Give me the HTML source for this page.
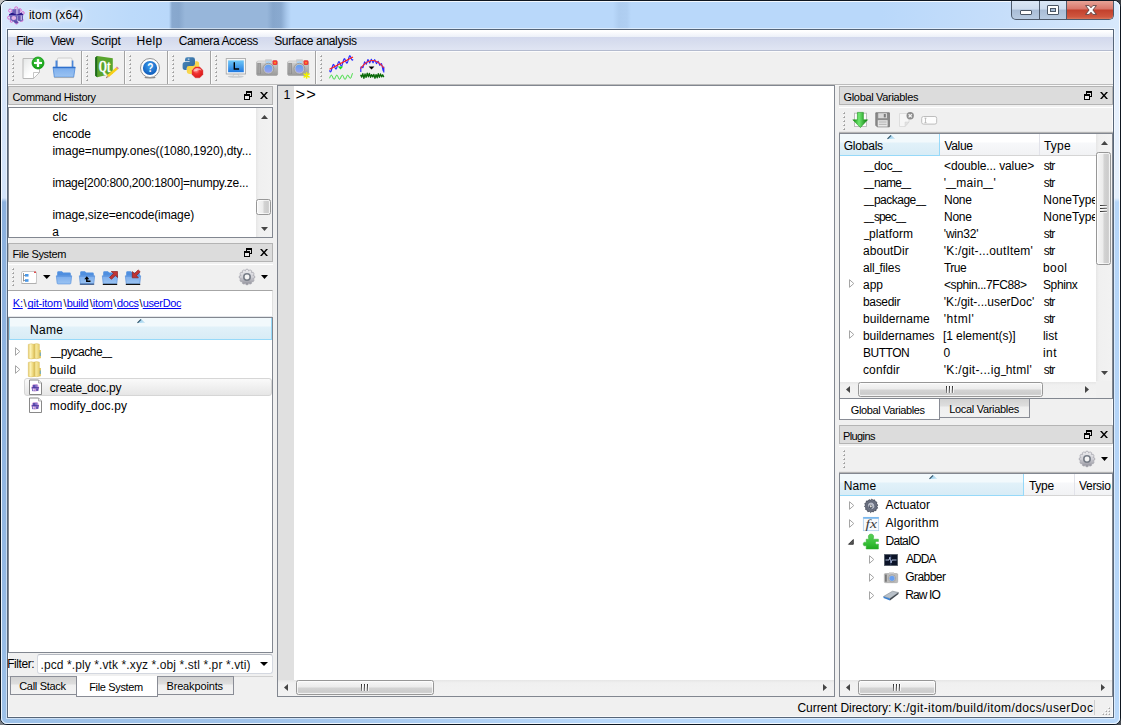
<!DOCTYPE html>
<html><head><meta charset="utf-8"><title>itom (x64)</title>
<style>
html,body{margin:0;padding:0;}
body{width:1121px;height:725px;overflow:hidden;position:relative;background:#fff;font-family:"Liberation Sans",sans-serif;font-size:12px;}
div,span.t,svg{position:absolute;box-sizing:border-box;}
span.t{white-space:nowrap;}
svg{overflow:visible;}
span.u{display:inline-block;width:5px;transform:translateY(-1px) scaleX(.76);transform-origin:0 0;letter-spacing:0;}

</style></head>
<body>
<div style="left:0px;top:0px;width:1121px;height:725px;background:#c4c4c4;"></div>
<div style="left:1111px;top:0px;width:10px;height:10px;background:#3a3e44;"></div>
<div style="left:0px;top:715px;width:10px;height:10px;background:#7c8086;"></div>
<div style="left:1111px;top:715px;width:10px;height:10px;background:#4a4e54;"></div>
<div style="left:0px;top:0px;width:1121px;height:725px;background:#b8d8fa;border-radius:7px;border:1px solid #0e1620;"></div>
<div style="left:1px;top:1px;width:1119px;height:29px;border-radius:6px 6px 0 0;background:linear-gradient(90deg,#d9e9fb 0px,#c8e0fa 60px,#bcdafa 130px,#b9d8fa 168px,#89a9cf 171px,#87a7cd 178px,#97b6da 184px,#97b6da 266px,#86a6cc 272px,#8aaad0 280px,#a9c9ed 286px,#b9d8fa 290px,#b9d8fa 612px,#aecdf0 618px,#b0cff2 626px,#b9d8fa 630px,#b9d8fa 880px,#c6defa 1000px,#d3e6fc 1090px,#d8e9fc 100%);"></div>
<div style="left:1px;top:718px;width:1119px;height:6px;border-radius:0 0 6px 6px;background:linear-gradient(90deg,#9dc1e8 0,#a0c3ea 250px,#b8d8fa 600px,#b8d8fa 100%);"></div>
<div style="left:1px;top:30px;width:6px;height:690px;background:linear-gradient(180deg,#d9e8fb 0,#d4e4f9 100px,#d2e3f8 168px,#8cb1de 172px,#8fb4e0 330px,#94b9e4 560px,#9dc1e8 100%);"></div>
<div style="left:1114px;top:30px;width:6px;height:690px;background:linear-gradient(180deg,#dbeafc 0,#e6f0fd 60px,#e4effc 168px,#b6d6f9 172px,#b4d4f7 400px,#b8d8fa 100%);"></div>
<div style="left:1px;top:1px;width:1119px;height:723px;border-radius:6px;border:1px solid rgba(255,255,255,0.82);background:none;"></div>
<div style="left:6px;top:28px;width:1109px;height:691px;border:1px solid rgba(255,255,255,.5);background:none;"></div>
<div style="left:7px;top:29px;width:1107px;height:689px;border:1px solid #566578;background:#f0f0f0;"></div>
<div style="left:8px;top:30px;width:1105px;height:687px;border:1px solid #fafafa;border-top:none;background:none;"></div>
<svg style="left:7px;top:6px" width="18" height="18" viewBox="0 0 18 18"><g fill="none" stroke="#e048c4" stroke-width="0.900" opacity=".85"><circle cx="3.200" cy="4.600" r="1.600"/><circle cx="9.200" cy="2.300" r="1.500"/><circle cx="13" cy="4" r="1.300"/><circle cx="15.800" cy="7" r="1.400"/><circle cx="2.200" cy="11.600" r="1.600"/><circle cx="4.500" cy="15" r="1.300"/><circle cx="9.500" cy="16.500" r="1.500"/><circle cx="14.500" cy="14" r="1.500"/></g><path d="M5.300 3.200h7.200v6H5.300z" fill="#6a5cb4"/><path d="M9 2.600h3.500v6.400H9z" fill="#b4a4dc"/><path d="M11.200 3.200h1.600v5.500h-1.600z" fill="#7a64bc"/><path d="M2 8.200l3-1.600 4 1.800 3-0.400 2-1.600 2.200 1.800v1.400H2z" fill="#2a1a8c"/><path d="M2.600 9.400h7.400v5.600l-3 1-3.600-2z" fill="#6c60b8"/><ellipse cx="6.800" cy="12" rx="2.400" ry="2" fill="#e4b4e4"/><path d="M10.400 9.400h5.600v4.800l-2.400 1.400-3.200-1z" fill="#6658b0"/><path d="M13.600 9.600h1.400v4.600h-1.400z" fill="#c0b0e0"/><path d="M7 14.500l3 0.500 1.500 1.500-2 1.200-2.500-1.400z" fill="#5a4ca8"/></svg>
<span id="t047e91" class="t" style="left:28.88px;top:6.84px;font-size:12px;line-height:16px;color:#000;letter-spacing:0.080px;text-shadow:0 0 4px #fff,0 0 6px #fff,0 0 8px rgba(255,255,255,.8);">itom (x64)</span>
<div style="left:1011px;top:1px;width:103px;height:19px;border:1px solid #4d5a6b;border-top:none;border-radius:0 0 5px 5px;background:linear-gradient(180deg,#dbe7f5 0%,#cddcee 45%,#a9bdd6 50%,#b8cbe2 100%);overflow:hidden;"><div style="left:54px;top:-1px;width:48px;height:20px;background:linear-gradient(180deg,#e9a99c 0%,#d9766a 45%,#c2402c 50%,#d0573f 85%,#dd8a6e 100%);border-left:1px solid #4d5a6b;"></div><div style="left:27px;top:-1px;width:1px;height:20px;background:#4d5a6b;"></div></div>
<div style="left:1020px;top:10px;width:12px;height:5px;background:#fff;border:1px solid #4a5665;border-radius:1px;"></div>
<div style="left:1047px;top:5px;width:12px;height:10px;background:#fff;border:1px solid #4a5665;border-radius:1px;"></div>
<div style="left:1050px;top:8px;width:6px;height:4px;background:#a9bdd6;border:1px solid #4a5665;"></div>
<svg style="left:1085px;top:5px" width="12" height="10" viewBox="0 0 12 10"><path d="M0.600 0.600 L4.200 0.600 L6 2.800 L7.800 0.600 L11.400 0.600 L7.900 5 L11.400 9.400 L7.800 9.400 L6 7.200 L4.200 9.400 L0.600 9.400 L4.100 5 Z" fill="#fff" stroke="#5a4040" stroke-width="0.9"/></svg>
<div style="left:8px;top:30px;width:1105px;height:20px;background:linear-gradient(180deg,#ffffff 0,#ffffff 1px,#f6f8fc 4px,#ecf0f8 7px,#d3d9ed 7.500px,#d8deef 13px,#e0e5f3 20px);"></div>
<div style="left:8px;top:50px;width:1105px;height:1px;background:#b4bbcf;"></div>
<span id="t0b2791" class="t" style="left:16.22px;top:32.84px;font-size:12px;line-height:16px;color:#000;letter-spacing:-0.540px;">File</span>
<span id="t4351c1" class="t" style="left:50.22px;top:32.84px;font-size:12px;line-height:16px;color:#000;letter-spacing:-0.540px;">View</span>
<span id="tf907e1" class="t" style="left:91.00px;top:32.84px;font-size:12px;line-height:16px;color:#000;letter-spacing:-0.180px;">Script</span>
<span id="t6a26f1" class="t" style="left:136.60px;top:32.84px;font-size:12px;line-height:16px;color:#000;letter-spacing:0.300px;">Help</span>
<span id="t5fb631" class="t" style="left:178.75px;top:32.84px;font-size:12px;line-height:16px;color:#000;letter-spacing:-0.375px;">Camera Access</span>
<span id="ta3ac31" class="t" style="left:274.22px;top:32.84px;font-size:12px;line-height:16px;color:#000;letter-spacing:-0.348px;">Surface analysis</span>
<div style="left:8px;top:51px;width:1105px;height:33px;background:#f0f0f0;border-top:1px solid #fcfcfc;"></div>
<div style="left:8px;top:84px;width:1105px;height:1px;background:#bcbcbc;"></div>
<div style="left:8px;top:85px;width:1105px;height:1px;background:#f8f8f8;"></div>
<div style="left:12px;top:55px;width:3px;height:28px;"><div style="left:0;top:0px;width:2px;height:2px;background:#b6b6b6;"></div><div style="left:0;top:0px;width:1px;height:1px;background:#fff;"></div><div style="left:1px;top:1px;width:1px;height:1px;background:#9c9c9c;"></div><div style="left:0;top:4px;width:2px;height:2px;background:#b6b6b6;"></div><div style="left:0;top:4px;width:1px;height:1px;background:#fff;"></div><div style="left:1px;top:5px;width:1px;height:1px;background:#9c9c9c;"></div><div style="left:0;top:8px;width:2px;height:2px;background:#b6b6b6;"></div><div style="left:0;top:8px;width:1px;height:1px;background:#fff;"></div><div style="left:1px;top:9px;width:1px;height:1px;background:#9c9c9c;"></div><div style="left:0;top:12px;width:2px;height:2px;background:#b6b6b6;"></div><div style="left:0;top:12px;width:1px;height:1px;background:#fff;"></div><div style="left:1px;top:13px;width:1px;height:1px;background:#9c9c9c;"></div><div style="left:0;top:16px;width:2px;height:2px;background:#b6b6b6;"></div><div style="left:0;top:16px;width:1px;height:1px;background:#fff;"></div><div style="left:1px;top:17px;width:1px;height:1px;background:#9c9c9c;"></div><div style="left:0;top:20px;width:2px;height:2px;background:#b6b6b6;"></div><div style="left:0;top:20px;width:1px;height:1px;background:#fff;"></div><div style="left:1px;top:21px;width:1px;height:1px;background:#9c9c9c;"></div><div style="left:0;top:24px;width:2px;height:2px;background:#b6b6b6;"></div><div style="left:0;top:24px;width:1px;height:1px;background:#fff;"></div><div style="left:1px;top:25px;width:1px;height:1px;background:#9c9c9c;"></div></div>
<div style="left:86px;top:55px;width:3px;height:28px;"><div style="left:0;top:0px;width:2px;height:2px;background:#b6b6b6;"></div><div style="left:0;top:0px;width:1px;height:1px;background:#fff;"></div><div style="left:1px;top:1px;width:1px;height:1px;background:#9c9c9c;"></div><div style="left:0;top:4px;width:2px;height:2px;background:#b6b6b6;"></div><div style="left:0;top:4px;width:1px;height:1px;background:#fff;"></div><div style="left:1px;top:5px;width:1px;height:1px;background:#9c9c9c;"></div><div style="left:0;top:8px;width:2px;height:2px;background:#b6b6b6;"></div><div style="left:0;top:8px;width:1px;height:1px;background:#fff;"></div><div style="left:1px;top:9px;width:1px;height:1px;background:#9c9c9c;"></div><div style="left:0;top:12px;width:2px;height:2px;background:#b6b6b6;"></div><div style="left:0;top:12px;width:1px;height:1px;background:#fff;"></div><div style="left:1px;top:13px;width:1px;height:1px;background:#9c9c9c;"></div><div style="left:0;top:16px;width:2px;height:2px;background:#b6b6b6;"></div><div style="left:0;top:16px;width:1px;height:1px;background:#fff;"></div><div style="left:1px;top:17px;width:1px;height:1px;background:#9c9c9c;"></div><div style="left:0;top:20px;width:2px;height:2px;background:#b6b6b6;"></div><div style="left:0;top:20px;width:1px;height:1px;background:#fff;"></div><div style="left:1px;top:21px;width:1px;height:1px;background:#9c9c9c;"></div><div style="left:0;top:24px;width:2px;height:2px;background:#b6b6b6;"></div><div style="left:0;top:24px;width:1px;height:1px;background:#fff;"></div><div style="left:1px;top:25px;width:1px;height:1px;background:#9c9c9c;"></div></div>
<div style="left:129px;top:55px;width:3px;height:28px;"><div style="left:0;top:0px;width:2px;height:2px;background:#b6b6b6;"></div><div style="left:0;top:0px;width:1px;height:1px;background:#fff;"></div><div style="left:1px;top:1px;width:1px;height:1px;background:#9c9c9c;"></div><div style="left:0;top:4px;width:2px;height:2px;background:#b6b6b6;"></div><div style="left:0;top:4px;width:1px;height:1px;background:#fff;"></div><div style="left:1px;top:5px;width:1px;height:1px;background:#9c9c9c;"></div><div style="left:0;top:8px;width:2px;height:2px;background:#b6b6b6;"></div><div style="left:0;top:8px;width:1px;height:1px;background:#fff;"></div><div style="left:1px;top:9px;width:1px;height:1px;background:#9c9c9c;"></div><div style="left:0;top:12px;width:2px;height:2px;background:#b6b6b6;"></div><div style="left:0;top:12px;width:1px;height:1px;background:#fff;"></div><div style="left:1px;top:13px;width:1px;height:1px;background:#9c9c9c;"></div><div style="left:0;top:16px;width:2px;height:2px;background:#b6b6b6;"></div><div style="left:0;top:16px;width:1px;height:1px;background:#fff;"></div><div style="left:1px;top:17px;width:1px;height:1px;background:#9c9c9c;"></div><div style="left:0;top:20px;width:2px;height:2px;background:#b6b6b6;"></div><div style="left:0;top:20px;width:1px;height:1px;background:#fff;"></div><div style="left:1px;top:21px;width:1px;height:1px;background:#9c9c9c;"></div><div style="left:0;top:24px;width:2px;height:2px;background:#b6b6b6;"></div><div style="left:0;top:24px;width:1px;height:1px;background:#fff;"></div><div style="left:1px;top:25px;width:1px;height:1px;background:#9c9c9c;"></div></div>
<div style="left:172px;top:55px;width:3px;height:28px;"><div style="left:0;top:0px;width:2px;height:2px;background:#b6b6b6;"></div><div style="left:0;top:0px;width:1px;height:1px;background:#fff;"></div><div style="left:1px;top:1px;width:1px;height:1px;background:#9c9c9c;"></div><div style="left:0;top:4px;width:2px;height:2px;background:#b6b6b6;"></div><div style="left:0;top:4px;width:1px;height:1px;background:#fff;"></div><div style="left:1px;top:5px;width:1px;height:1px;background:#9c9c9c;"></div><div style="left:0;top:8px;width:2px;height:2px;background:#b6b6b6;"></div><div style="left:0;top:8px;width:1px;height:1px;background:#fff;"></div><div style="left:1px;top:9px;width:1px;height:1px;background:#9c9c9c;"></div><div style="left:0;top:12px;width:2px;height:2px;background:#b6b6b6;"></div><div style="left:0;top:12px;width:1px;height:1px;background:#fff;"></div><div style="left:1px;top:13px;width:1px;height:1px;background:#9c9c9c;"></div><div style="left:0;top:16px;width:2px;height:2px;background:#b6b6b6;"></div><div style="left:0;top:16px;width:1px;height:1px;background:#fff;"></div><div style="left:1px;top:17px;width:1px;height:1px;background:#9c9c9c;"></div><div style="left:0;top:20px;width:2px;height:2px;background:#b6b6b6;"></div><div style="left:0;top:20px;width:1px;height:1px;background:#fff;"></div><div style="left:1px;top:21px;width:1px;height:1px;background:#9c9c9c;"></div><div style="left:0;top:24px;width:2px;height:2px;background:#b6b6b6;"></div><div style="left:0;top:24px;width:1px;height:1px;background:#fff;"></div><div style="left:1px;top:25px;width:1px;height:1px;background:#9c9c9c;"></div></div>
<div style="left:215px;top:55px;width:3px;height:28px;"><div style="left:0;top:0px;width:2px;height:2px;background:#b6b6b6;"></div><div style="left:0;top:0px;width:1px;height:1px;background:#fff;"></div><div style="left:1px;top:1px;width:1px;height:1px;background:#9c9c9c;"></div><div style="left:0;top:4px;width:2px;height:2px;background:#b6b6b6;"></div><div style="left:0;top:4px;width:1px;height:1px;background:#fff;"></div><div style="left:1px;top:5px;width:1px;height:1px;background:#9c9c9c;"></div><div style="left:0;top:8px;width:2px;height:2px;background:#b6b6b6;"></div><div style="left:0;top:8px;width:1px;height:1px;background:#fff;"></div><div style="left:1px;top:9px;width:1px;height:1px;background:#9c9c9c;"></div><div style="left:0;top:12px;width:2px;height:2px;background:#b6b6b6;"></div><div style="left:0;top:12px;width:1px;height:1px;background:#fff;"></div><div style="left:1px;top:13px;width:1px;height:1px;background:#9c9c9c;"></div><div style="left:0;top:16px;width:2px;height:2px;background:#b6b6b6;"></div><div style="left:0;top:16px;width:1px;height:1px;background:#fff;"></div><div style="left:1px;top:17px;width:1px;height:1px;background:#9c9c9c;"></div><div style="left:0;top:20px;width:2px;height:2px;background:#b6b6b6;"></div><div style="left:0;top:20px;width:1px;height:1px;background:#fff;"></div><div style="left:1px;top:21px;width:1px;height:1px;background:#9c9c9c;"></div><div style="left:0;top:24px;width:2px;height:2px;background:#b6b6b6;"></div><div style="left:0;top:24px;width:1px;height:1px;background:#fff;"></div><div style="left:1px;top:25px;width:1px;height:1px;background:#9c9c9c;"></div></div>
<div style="left:320px;top:55px;width:3px;height:28px;"><div style="left:0;top:0px;width:2px;height:2px;background:#b6b6b6;"></div><div style="left:0;top:0px;width:1px;height:1px;background:#fff;"></div><div style="left:1px;top:1px;width:1px;height:1px;background:#9c9c9c;"></div><div style="left:0;top:4px;width:2px;height:2px;background:#b6b6b6;"></div><div style="left:0;top:4px;width:1px;height:1px;background:#fff;"></div><div style="left:1px;top:5px;width:1px;height:1px;background:#9c9c9c;"></div><div style="left:0;top:8px;width:2px;height:2px;background:#b6b6b6;"></div><div style="left:0;top:8px;width:1px;height:1px;background:#fff;"></div><div style="left:1px;top:9px;width:1px;height:1px;background:#9c9c9c;"></div><div style="left:0;top:12px;width:2px;height:2px;background:#b6b6b6;"></div><div style="left:0;top:12px;width:1px;height:1px;background:#fff;"></div><div style="left:1px;top:13px;width:1px;height:1px;background:#9c9c9c;"></div><div style="left:0;top:16px;width:2px;height:2px;background:#b6b6b6;"></div><div style="left:0;top:16px;width:1px;height:1px;background:#fff;"></div><div style="left:1px;top:17px;width:1px;height:1px;background:#9c9c9c;"></div><div style="left:0;top:20px;width:2px;height:2px;background:#b6b6b6;"></div><div style="left:0;top:20px;width:1px;height:1px;background:#fff;"></div><div style="left:1px;top:21px;width:1px;height:1px;background:#9c9c9c;"></div><div style="left:0;top:24px;width:2px;height:2px;background:#b6b6b6;"></div><div style="left:0;top:24px;width:1px;height:1px;background:#fff;"></div><div style="left:1px;top:25px;width:1px;height:1px;background:#9c9c9c;"></div></div>
<div style="left:81px;top:51px;width:1px;height:33px;background:#a3a3a3;"></div>
<div style="left:82px;top:51px;width:1px;height:33px;background:#fcfcfc;"></div>
<div style="left:124px;top:51px;width:1px;height:33px;background:#a3a3a3;"></div>
<div style="left:125px;top:51px;width:1px;height:33px;background:#fcfcfc;"></div>
<div style="left:167px;top:51px;width:1px;height:33px;background:#a3a3a3;"></div>
<div style="left:168px;top:51px;width:1px;height:33px;background:#fcfcfc;"></div>
<div style="left:210px;top:51px;width:1px;height:33px;background:#a3a3a3;"></div>
<div style="left:211px;top:51px;width:1px;height:33px;background:#fcfcfc;"></div>
<div style="left:315px;top:51px;width:1px;height:33px;background:#a3a3a3;"></div>
<div style="left:316px;top:51px;width:1px;height:33px;background:#fcfcfc;"></div>
<svg width="0" height="0" style="left:0;top:0"><defs>
<linearGradient id="gpage" x1="0" y1="0" x2="1" y2="1"><stop offset="0" stop-color="#e4e6e6"/><stop offset="0.6" stop-color="#ffffff"/></linearGradient>
<linearGradient id="gtray" x1="0" y1="0" x2="0" y2="1"><stop offset="0" stop-color="#4f8fdf"/><stop offset="0.15" stop-color="#7fb0ee"/><stop offset="1" stop-color="#9cc4f2"/></linearGradient>
<radialGradient id="ggreen" cx="0.5" cy="0.4" r="0.6"><stop offset="0" stop-color="#5fd45f"/><stop offset="1" stop-color="#0a9a0a"/></radialGradient>
<radialGradient id="ghelp" cx="0.5" cy="0.35" r="0.7"><stop offset="0" stop-color="#3f9fef"/><stop offset="1" stop-color="#0a55b5"/></radialGradient>
<linearGradient id="gcam" x1="0" y1="0" x2="0" y2="1"><stop offset="0" stop-color="#d4d4d4"/><stop offset="0.5" stop-color="#b4b4b4"/><stop offset="1" stop-color="#9a9a9a"/></linearGradient>
<linearGradient id="glens" x1="0" y1="0" x2="0" y2="1"><stop offset="0" stop-color="#5fa0f0"/><stop offset="1" stop-color="#9aa0f0"/></linearGradient>
<linearGradient id="gscr" x1="0" y1="0" x2="0" y2="1"><stop offset="0" stop-color="#6fc8f8"/><stop offset="1" stop-color="#1f78e0"/></linearGradient>
<radialGradient id="gred" cx="0.4" cy="0.35" r="0.7"><stop offset="0" stop-color="#ff8a8a"/><stop offset="0.4" stop-color="#f03030"/><stop offset="1" stop-color="#d81818"/></radialGradient>
</defs></svg>
<svg style="left:21px;top:55px" width="24" height="24" viewBox="0 0 24 24"><path d="M2 3.5h16.5v14l-6 6H2z" fill="url(#gpage)" stroke="#b8b8b8" stroke-width="1"/><path d="M12.5 23.5v-6h6z" fill="#fff" stroke="#b8b8b8" stroke-width="0.8"/><circle cx="17" cy="8" r="6" fill="url(#ggreen)" stroke="#0c9a0c" stroke-width="0.8"/><path d="M13 8h8M17 4v8" stroke="#fff" stroke-width="2.2"/></svg>
<svg style="left:52px;top:55px" width="24" height="24" viewBox="0 0 24 24"><rect x="5.4" y="3" width="14.6" height="10" rx="1.2" fill="#f6f6f6" stroke="#c4c4c4" stroke-width="0.8"/><path d="M3.5 5.5h2v7h-2zM19.8 5.5h1.6v7h-1.6z" fill="#4a86d8"/><path d="M1 12h22.2l-1.5 10.2H2.3z" fill="url(#gtray)" stroke="#3f7fd4" stroke-width="0.7"/><path d="M1 12h22.2v1.2H1z" fill="#2f70cc"/><path d="M2.5 22.6h19" stroke="#a8a8a8" stroke-width="0.8"/></svg>
<svg style="left:94px;top:55px" width="24" height="24" viewBox="0 0 24 24"><path d="M1.200 2.400l2-1.500 15.600 2.400v15.200L3.200 22.300l-2-1.500z" fill="#5aa52e"/><path d="M1.200 2.400l2-1.500v21.400l-2-1.500z" fill="#1f6a1f"/><g transform="translate(4.8,17) scale(0.62,1)"><text x="0" y="0" font-family="Liberation Serif" font-weight="bold" font-size="17" fill="#fff" stroke="#fff" stroke-width="0.4">Qt</text></g><path d="M22 12.400l1.900 1.900-8.900 7.700-2-1.800z" fill="#f8d018"/><path d="M22 12.400l0.900-0.900 2 1.800-1 1z" fill="#e08090"/><path d="M13 20.200l2 1.800-3 1.200z" fill="#c8a070"/><path d="M12 23.200l1-0.400-0.600-0.600z" fill="#404040"/></svg>
<svg style="left:138px;top:55px" width="24" height="24" viewBox="0 0 24 24"><ellipse cx="12" cy="22.500" rx="5.500" ry="0.900" fill="#333" opacity=".55"/><circle cx="12" cy="13" r="9.500" fill="#fdfdfd" stroke="#8a8a8a" stroke-width="0.900"/><circle cx="12" cy="13" r="7.100" fill="url(#ghelp)"/><g transform="translate(9.300,17.400) scale(0.800,1)"><text x="0" y="0" font-family="Liberation Sans" font-weight="bold" font-size="12.500" fill="#fff">?</text></g></svg>
<svg style="left:181px;top:55px" width="24" height="24" viewBox="0 0 24 24"><defs><linearGradient id="gpyb" x1="0" y1="0" x2="1" y2="1"><stop offset="0" stop-color="#4a8ac0"/><stop offset="1" stop-color="#2f6494"/></linearGradient><linearGradient id="gpyy" x1="0" y1="0" x2="1" y2="1"><stop offset="0" stop-color="#fce060"/><stop offset="1" stop-color="#f4cc38"/></linearGradient></defs><path d="M8.200 2.300h3.400q2.400 0 2.400 2.400v4q0 2.300-2.300 2.300h-3.700q-2.400 0-2.400 2.400v1.600h-1.600q-2.400 0-2.400-2.700v-2.600q0-2.700 2.400-2.700h4.600v-0.800h-4.600v-1.500q0-2.400 2.200-2.400z" fill="url(#gpyy)" transform="rotate(180 9.900 10.650)"/><path d="M8.200 2.300h3.400q2.400 0 2.400 2.400v4q0 2.300-2.300 2.300h-3.700q-2.400 0-2.400 2.400v1.600h-1.600q-2.400 0-2.400-2.700v-2.600q0-2.700 2.400-2.700h4.600v-0.800h-4.600v-1.500q0-2.400 2.200-2.400z" fill="url(#gpyb)"/><rect x="6.800" y="3.600" width="1.600" height="1.100" fill="#dce8f4"/><path d="M14.300 12h4.400l3.200 3.200v4.400l-3.200 3.200h-4.400l-3.200-3.200v-4.400z" fill="url(#gred)" stroke="#d42020" stroke-width="0.400"/><path d="M12.300 16.200q0.600-3 4.200-3.200 3.400 0.200 4.200 2.600-2.200-1.200-4.200 0-2 1.200-4.200 0.600z" fill="#fff" opacity=".55"/></svg>
<svg style="left:224px;top:55px" width="24" height="24" viewBox="0 0 24 24"><ellipse cx="11.800" cy="21.600" rx="8" ry="1.100" fill="#c8ccd0"/><path d="M10 18.800h4l0.800 2.600h-5.600z" fill="#ececec" stroke="#c4c4c4" stroke-width="0.500"/><rect x="2.200" y="3.600" width="19.400" height="15.400" fill="#f6f6f6" stroke="#a4a4a4" stroke-width="0.800"/><rect x="4.100" y="5.400" width="15.700" height="11.800" fill="url(#gscr)"/><path d="M10.300 7.200v6.800h4.800" fill="none" stroke="#000" stroke-width="1.400"/></svg>
<svg style="left:256px;top:55px" width="24" height="24" viewBox="0 0 24 24"><rect x="0.6" y="6.2" width="21" height="14.2" rx="1.5" fill="url(#gcam)" stroke="#9a9a9a" stroke-width="0.6"/><path d="M1.2 7h8" stroke="#ececec" stroke-width="1"/><rect x="9" y="4.3" width="7" height="3" rx="1" fill="#cccccc"/><rect x="1.4" y="8" width="3.4" height="11" fill="#8c8c8c"/><path d="M2.2 8.4v10.2M3.5 8.4v10.2" stroke="#bcbcbc" stroke-width="0.5"/><rect x="10" y="6.4" width="5" height="1.6" fill="#a8d4f8"/><circle cx="12.4" cy="13.7" r="5.4" fill="#c4c4c4" stroke="#909090" stroke-width="0.8"/><circle cx="12.4" cy="13.7" r="4" fill="url(#glens)"/><rect x="16.6" y="5.3" width="4.8" height="4.8" rx="1.3" fill="#f03838"/><circle cx="19" cy="7.7" r="1" fill="#ff9020"/></svg>
<svg style="left:287px;top:55px" width="26" height="26" viewBox="0 0 26 26"><rect x="0.6" y="6.2" width="21" height="14.2" rx="1.5" fill="url(#gcam)" stroke="#9a9a9a" stroke-width="0.6"/><path d="M1.2 7h8" stroke="#ececec" stroke-width="1"/><rect x="9" y="4.3" width="7" height="3" rx="1" fill="#cccccc"/><rect x="1.4" y="8" width="3.4" height="11" fill="#8c8c8c"/><path d="M2.2 8.4v10.2M3.5 8.4v10.2" stroke="#bcbcbc" stroke-width="0.5"/><rect x="10" y="6.4" width="5" height="1.6" fill="#a8d4f8"/><circle cx="12.4" cy="13.7" r="5.4" fill="#c4c4c4" stroke="#909090" stroke-width="0.8"/><circle cx="12.4" cy="13.7" r="4" fill="url(#glens)"/><rect x="16.6" y="5.3" width="4.8" height="4.8" rx="1.3" fill="#f03838"/><circle cx="19" cy="7.7" r="1" fill="#ff9020"/><path d="M19.6 17.2v6.6M16.6 18.6l6 3.8M22.6 18.6l-6 3.8" stroke="#f0f000" stroke-width="1.5"/></svg>
<svg style="left:329px;top:55px" width="24" height="24" viewBox="0 0 24 24"><path d="M0.50 15.36L0.89 16.27L1.28 16.79L1.68 16.77L2.07 16.17L2.46 15.07L2.85 13.65L3.24 12.16L3.63 10.83L4.03 9.91L4.42 9.53L4.81 9.72L5.20 10.41L5.59 11.42L5.98 12.50L6.38 13.40L6.77 13.89L7.16 13.84L7.55 13.22L7.94 12.10L8.33 10.68L8.72 9.18L9.12 7.87L9.51 6.97L9.90 6.62L10.29 6.84L10.68 7.55L11.08 8.56L11.47 9.64L11.86 10.52L12.25 11.00L12.64 10.92L13.03 10.27L13.43 9.14L13.82 7.70L14.21 6.21L14.60 4.91L14.99 4.04L15.38 3.71L15.78 3.95L16.17 4.68L16.56 5.71L16.95 6.78L17.34 7.65L17.73 8.10L18.12 8.00L18.52 7.32L18.91 6.17L19.30 4.72L19.69 3.23L20.08 1.96L20.47 1.10L20.87 0.80L21.26 1.07L21.65 1.82L22.04 2.85L22.43 3.92L22.82 4.77L23.22 5.20L23.61 5.07L24.00 4.37" fill="none" stroke="#2828ff" stroke-width="1.150"/><path d="M0.500 14.300L24 2" stroke="#ff1818" stroke-width="1.100"/><path d="M8.800 11.600h5.400l-2.700 3z" fill="#18e418"/><path d="M0.50 23.28L0.88 22.41L1.27 21.50L1.65 20.73L2.03 20.23L2.42 20.11L2.80 20.38L3.18 21.01L3.57 21.86L3.95 22.77L4.33 23.58L4.72 24.12L5.10 24.30L5.48 24.08L5.87 23.50L6.25 22.67L6.63 21.76L7.02 20.93L7.40 20.34L7.78 20.10L8.17 20.27L8.55 20.80L8.93 21.60L9.32 22.51L9.70 23.37L10.08 24.00L10.47 24.29L10.85 24.18L11.23 23.70L11.62 22.93L12.00 22.02L12.38 21.14L12.77 20.47L13.15 20.13L13.53 20.18L13.92 20.61L14.30 21.35L14.68 22.25L15.07 23.14L15.45 23.85L15.83 24.25L16.22 24.25L16.60 23.87L16.98 23.17L17.37 22.28L17.75 21.38L18.13 20.64L18.52 20.19L18.90 20.12L19.28 20.45L19.67 21.12L20.05 21.99L20.43 22.62L20.82 23.12L21.20 23.34L21.58 23.18L21.97 22.63L22.35 21.73L22.73 20.60L23.12 19.41L23.50 18.32" fill="none" stroke="#34dc34" stroke-width="1"/></svg>
<svg style="left:360px;top:55px" width="24" height="24" viewBox="0 0 24 24"><path d="M0.80 17.00L0.80 13.00L1.20 11.76L2.89 12.77L4.58 6.89L6.28 9.25L7.97 4.49L9.66 7.95L11.35 4.33L13.05 7.78L14.74 4.64L16.43 8.63L18.12 6.32L19.82 10.32L21.51 8.67L23.20 15.85L23.80 12L23.80 17.50" fill="none" stroke="#2828ff" stroke-width="1.150" stroke-linejoin="round"/><path d="M0.60 13.60L1.37 12.54L2.15 11.59L2.92 10.72L3.69 9.92L4.47 9.19L5.24 8.53L6.01 7.92L6.79 7.38L7.56 6.91L8.33 6.50L9.11 6.16L9.88 5.89L10.65 5.69L11.43 5.56L12.20 5.50L12.97 5.52L13.75 5.60L14.52 5.75L15.29 5.98L16.07 6.27L16.84 6.63L17.61 7.06L18.39 7.55L19.16 8.12L19.93 8.74L20.71 9.43L21.48 10.18L22.25 11.00L23.03 11.90L23.80 12.88" fill="none" stroke="#ff2828" stroke-width="1.050"/><path d="M8.600 11.600h5.800l-2.900 3z" fill="#000"/><path d="M0.60 19.65L1.70 22.13L2.81 18.73L3.91 23.46L5.02 18.82L6.12 22.45L7.23 18.08L8.33 21.81L9.44 18.30L10.54 22.25L11.65 19.61L12.75 21.94L13.86 19.31L14.96 23.22L16.07 19.55L17.17 22.79L18.28 18.70L19.38 22.41L20.49 18.87L21.59 21.84L22.70 19.77L23.80 22.10" fill="none" stroke="#0a6a0a" stroke-width="1.300" stroke-linejoin="round"/></svg>
<div style="left:8px;top:86px;width:265px;height:19px;background:#dcdcdc;border:1px solid #b4b4b4;"></div>
<span id="tdcdc61" class="t" style="left:12.50px;top:89.19px;font-size:11px;line-height:16px;color:#000;letter-spacing:-0.321px;">Command History</span>
<svg style="left:244px;top:91px" width="9" height="10" viewBox="0 0 9 10"><path d="M2 0h6v6H6v-1h1V2H3v1H2z" fill="#000"/><rect x="0" y="3" width="6" height="6" fill="#000"/><rect x="1" y="5" width="4" height="3" fill="#e9e9e9"/></svg>
<svg style="left:260px;top:92px" width="8" height="7" viewBox="0 0 8 7"><path d="M0 0h1.900L4 2.500 6.100 0H8L5 3.500 8 7H6.100L4 4.500 1.900 7H0l3-3.500z" fill="#000"/></svg>
<div style="left:8px;top:105px;width:265px;height:2px;background:#fbfbfb;"></div>
<div style="left:8px;top:107px;width:265px;height:131px;background:#fff;border:1px solid #828790;"></div>
<div style="left:256px;top:108px;width:16px;height:129px;background:linear-gradient(90deg,#e6e6e6 0,#f0f0f0 3px,#f2f2f2 100%);"></div>
<svg style="left:261px;top:115px" width="7" height="4" viewBox="0 0 7 4"><path d="M0 4L3.5 0L7 4Z" fill="#454545"/></svg>
<svg style="left:261px;top:227px" width="7" height="4" viewBox="0 0 7 4"><path d="M0 0L3.5 4L7 0Z" fill="#454545"/></svg>
<div style="left:256px;top:199px;width:15px;height:16px;border:1px solid #979797;border-radius:2.5px;background:linear-gradient(90deg,#f7f7f7 0,#ebebeb 48%,#d4d4d4 52%,#cdcdcd 80%,#d6d6d6 100%);box-shadow:inset 0 0 0 1px rgba(255,255,255,.7);"></div>
<span id="tddee11" class="t" style="left:52.50px;top:108.84px;font-size:12px;line-height:16px;color:#000;">clc</span>
<span id="t97a571" class="t" style="left:52.50px;top:125.84px;font-size:12px;line-height:16px;color:#000;letter-spacing:-0.180px;">encode</span>
<span id="t29c191" class="t" style="left:52.50px;top:142.84px;font-size:12px;line-height:16px;color:#000;letter-spacing:-0.069px;">image=numpy.ones((1080,1920),dty...</span>
<span id="t261cb1" class="t" style="left:52.50px;top:174.84px;font-size:12px;line-height:16px;color:#000;letter-spacing:-0.244px;">image[200:800,200:1800]=numpy.ze...</span>
<span id="tf7f881" class="t" style="left:52.50px;top:206.84px;font-size:12px;line-height:16px;color:#000;letter-spacing:-0.117px;">image,size=encode(image)</span>
<span id="t0cc171" class="t" style="left:52.20px;top:223.84px;font-size:12px;line-height:16px;color:#000;">a</span>
<div style="left:8px;top:243px;width:265px;height:19px;background:#dcdcdc;border:1px solid #b4b4b4;"></div>
<span id="t6c2021" class="t" style="left:12.50px;top:246.19px;font-size:11px;line-height:16px;color:#000;letter-spacing:-0.360px;">File System</span>
<svg style="left:244px;top:248px" width="9" height="10" viewBox="0 0 9 10"><path d="M2 0h6v6H6v-1h1V2H3v1H2z" fill="#000"/><rect x="0" y="3" width="6" height="6" fill="#000"/><rect x="1" y="5" width="4" height="3" fill="#e9e9e9"/></svg>
<svg style="left:260px;top:249px" width="8" height="7" viewBox="0 0 8 7"><path d="M0 0h1.900L4 2.500 6.100 0H8L5 3.500 8 7H6.100L4 4.500 1.900 7H0l3-3.500z" fill="#000"/></svg>
<div style="left:8px;top:264px;width:265px;height:1px;background:#fff;"></div>
<div style="left:12px;top:268px;width:3px;height:20px;"><div style="left:0;top:0px;width:2px;height:2px;background:#b6b6b6;"></div><div style="left:0;top:0px;width:1px;height:1px;background:#fff;"></div><div style="left:1px;top:1px;width:1px;height:1px;background:#9c9c9c;"></div><div style="left:0;top:4px;width:2px;height:2px;background:#b6b6b6;"></div><div style="left:0;top:4px;width:1px;height:1px;background:#fff;"></div><div style="left:1px;top:5px;width:1px;height:1px;background:#9c9c9c;"></div><div style="left:0;top:8px;width:2px;height:2px;background:#b6b6b6;"></div><div style="left:0;top:8px;width:1px;height:1px;background:#fff;"></div><div style="left:1px;top:9px;width:1px;height:1px;background:#9c9c9c;"></div><div style="left:0;top:12px;width:2px;height:2px;background:#b6b6b6;"></div><div style="left:0;top:12px;width:1px;height:1px;background:#fff;"></div><div style="left:1px;top:13px;width:1px;height:1px;background:#9c9c9c;"></div><div style="left:0;top:16px;width:2px;height:2px;background:#b6b6b6;"></div><div style="left:0;top:16px;width:1px;height:1px;background:#fff;"></div><div style="left:1px;top:17px;width:1px;height:1px;background:#9c9c9c;"></div></div>
<div style="left:8px;top:290px;width:265px;height:26px;background:#fff;border-top:1px solid #a6a6a6;border-right:1px solid #e0e0e0"></div>
<div style="left:8px;top:316px;width:265px;height:1px;background:#e4e6ea;"></div>
<svg style="left:21px;top:270px" width="16" height="16" viewBox="0 0 16 16"><rect x="0.500" y="1.500" width="15" height="12" rx="1.500" fill="#fff" stroke="#c8c8c8" stroke-width="1"/><path d="M0.500 13.500h15" stroke="#b0b0b0"/><path d="M2.500 3v8.500M2.500 5.500h2M2.500 10.500h2" stroke="#808080" stroke-width="0.800" fill="none"/><rect x="4" y="4" width="3.500" height="2.600" fill="#4a98e8"/><rect x="4" y="9.200" width="3.500" height="2.600" fill="#4a98e8"/><rect x="13" y="1.500" width="2" height="1.500" fill="#e05050"/></svg>
<svg style="left:43px;top:275px" width="8" height="4" viewBox="0 0 8 4"><path d="M0 0h7.500L3.750 4z" fill="#000"/></svg>
<svg style="left:56px;top:270px" width="16" height="16" viewBox="0 0 16 16"><path d="M1.200 2.500q0-1.200 1.200-1.200h3.500l1.200 1.300h6.500q1.200 0 1.200 1.200v2H1.200z" fill="#4f8fe0"/><path d="M0.300 5.800h15.400l-0.800 7.400q-0.100 0.800-1 0.800H2.100q-0.900 0-1-0.800z" fill="url(#gtray)" stroke="#3f7fd4" stroke-width="0.500"/></svg>
<svg style="left:79px;top:270px" width="16" height="16" viewBox="0 0 16 16"><path d="M1.200 2.500q0-1.200 1.200-1.200h3.500l1.200 1.300h6.500q1.200 0 1.200 1.200v2H1.200z" fill="#4f8fe0"/><path d="M0.300 5.800h15.400l-0.800 7.400q-0.100 0.800-1 0.800H2.100q-0.900 0-1-0.800z" fill="url(#gtray)" stroke="#3f7fd4" stroke-width="0.500"/><path d="M0.800 14.200h14.400" stroke="#1a3a70" stroke-width="1"/><path d="M11.500 11.200H7.800V9" fill="none" stroke="#000" stroke-width="1.500"/><path d="M5.300 9.300l2.500-3 2.500 3z" fill="#000"/></svg>
<svg style="left:102px;top:270px" width="16" height="16" viewBox="0 0 16 16"><path d="M1.200 2.500q0-1.200 1.200-1.200h3.500l1.200 1.300h6.500q1.200 0 1.200 1.200v2H1.200z" fill="#4f8fe0"/><path d="M0.300 5.800h15.400l-0.800 7.400q-0.100 0.800-1 0.800H2.100q-0.900 0-1-0.800z" fill="url(#gtray)" stroke="#3f7fd4" stroke-width="0.500"/><path d="M0.800 14.400h14.400" stroke="#101010" stroke-width="1.200"/><path d="M7.500 7.500l4-4-2.200-2h6.200v6l-2-2.200-4 4z" fill="#c03434" stroke="#8a2020" stroke-width="0.700"/></svg>
<svg style="left:125px;top:270px" width="16" height="16" viewBox="0 0 16 16"><path d="M1.200 2.500q0-1.200 1.200-1.200h3.500l1.200 1.300h6.500q1.200 0 1.200 1.200v2H1.200z" fill="#4f8fe0"/><path d="M0.300 5.800h15.400l-0.800 7.400q-0.100 0.800-1 0.800H2.100q-0.900 0-1-0.800z" fill="url(#gtray)" stroke="#3f7fd4" stroke-width="0.500"/><path d="M0.800 14.400h14.400" stroke="#101010" stroke-width="1.200"/><path d="M15.200 1.800l-3.800 3.800 2 2.200H7.300V1.600l2.200 2 3.700-3.700z" fill="#c03434" stroke="#8a2020" stroke-width="0.700"/></svg>
<svg style="left:239px;top:269px" width="16" height="16" viewBox="0 0 16 16"><defs><linearGradient id="ggear" x1="0" y1="0" x2="0" y2="1"><stop offset="0" stop-color="#eeeeF0"/><stop offset="0.5" stop-color="#d0d0d6"/><stop offset="1" stop-color="#8e8e98"/></linearGradient></defs><g transform="translate(8,8)"><path d="M-1.01 -7.73L1.01 -7.73L1.62 -6.09L1.64 -6.08L2.99 -7.20L4.74 -6.19L4.45 -4.46L4.46 -4.45L6.19 -4.74L7.20 -2.99L6.08 -1.64L6.09 -1.62L7.73 -1.01L7.73 1.01L6.09 1.62L6.08 1.64L7.20 2.99L6.19 4.74L4.46 4.45L4.45 4.46L4.74 6.19L2.99 7.20L1.64 6.08L1.62 6.09L1.01 7.73L-1.01 7.73L-1.62 6.09L-1.64 6.08L-2.99 7.20L-4.74 6.19L-4.45 4.46L-4.46 4.45L-6.19 4.74L-7.20 2.99L-6.08 1.64L-6.09 1.62L-7.73 1.01L-7.73 -1.01L-6.09 -1.62L-6.08 -1.64L-7.20 -2.99L-6.19 -4.74L-4.46 -4.45L-4.45 -4.46L-4.74 -6.19L-2.99 -7.20L-1.64 -6.08L-1.62 -6.09z" fill="url(#ggear)" stroke="#a2a2aa" stroke-width="0.700" stroke-linejoin="round"/><circle r="3.200" fill="#f4f4f4" stroke="#787e88" stroke-width="1.600"/></g></svg>
<svg style="left:261px;top:275px" width="7" height="4" viewBox="0 0 7 4"><path d="M0 0h7L3.500 4z" fill="#000"/></svg>
<span id="t0d19c1" class="t" style="left:12.72px;top:295.19px;font-size:11px;line-height:16px;color:#0000f0;letter-spacing:-0.180px;text-decoration:underline;text-decoration-skip-ink:none;text-decoration-thickness:1px;">K:</span>
<span id="t1c8331" class="t" style="left:27.56px;top:295.19px;font-size:11px;line-height:16px;color:#0000f0;letter-spacing:-0.206px;text-decoration:underline;text-decoration-skip-ink:none;text-decoration-thickness:1px;">git-itom</span>
<span id="tb0da21" class="t" style="left:66.72px;top:295.19px;font-size:11px;line-height:16px;color:#0000f0;letter-spacing:-0.315px;text-decoration:underline;text-decoration-skip-ink:none;text-decoration-thickness:1px;">build</span>
<span id="t3d9e41" class="t" style="left:92.72px;top:295.19px;font-size:11px;line-height:16px;color:#0000f0;letter-spacing:-0.240px;text-decoration:underline;text-decoration-skip-ink:none;text-decoration-thickness:1px;">itom</span>
<span id="te3e2a1" class="t" style="left:117.00px;top:295.19px;font-size:11px;line-height:16px;color:#0000f0;letter-spacing:-0.420px;text-decoration:underline;text-decoration-skip-ink:none;text-decoration-thickness:1px;">docs</span>
<span id="tea5291" class="t" style="left:142.72px;top:295.19px;font-size:11px;line-height:16px;color:#0000f0;letter-spacing:-0.360px;text-decoration:underline;text-decoration-skip-ink:none;text-decoration-thickness:1px;">userDoc</span>
<span id="t28d391" class="t" style="left:23.40px;top:295.19px;font-size:11px;line-height:16px;color:#101010;">\</span>
<span id="t28d392" class="t" style="left:63.60px;top:295.19px;font-size:11px;line-height:16px;color:#101010;">\</span>
<span id="t28d393" class="t" style="left:89.80px;top:295.19px;font-size:11px;line-height:16px;color:#101010;">\</span>
<span id="t28d394" class="t" style="left:113.20px;top:295.19px;font-size:11px;line-height:16px;color:#101010;">\</span>
<span id="t28d395" class="t" style="left:139.50px;top:295.19px;font-size:11px;line-height:16px;color:#101010;">\</span>
<div style="left:8px;top:317px;width:265px;height:336px;background:#fff;border:1px solid #828790;"></div>
<div style="left:9px;top:318px;width:263px;height:22px;background:linear-gradient(180deg,#f2f9fc 0,#f2f9fc 8px,#e1f1f9 9px,#d8ecf6 100%);border:1px solid #96d9f9;border-top:none;"></div>
<svg style="left:136.5px;top:319px" width="8" height="5" viewBox="0 0 8 5"><defs><linearGradient id="gsa" x1="0" y1="0" x2="1" y2="1"><stop offset="0" stop-color="#6fb8e4"/><stop offset="1" stop-color="#d8f0fa"/></linearGradient></defs><path d="M0.300 4L4 0.200L7.700 4z" fill="url(#gsa)"/><path d="M0.500 3.800L4 0.300" stroke="#2f4f63" stroke-width="1.100" fill="none"/><path d="M4 0.300L7.500 3.800" stroke="#a8cfe4" stroke-width="0.600" fill="none"/></svg>
<span id="t49ee31" class="t" style="left:30.10px;top:321.84px;font-size:12px;line-height:16px;color:#000;letter-spacing:0.300px;">Name</span>
<div style="left:24px;top:378px;width:248px;height:18px;border:1px solid #d6d6d6;border-radius:3px;background:linear-gradient(180deg,#fafafa 0,#e6e6e6 100%);"></div>
<svg style="left:15px;top:347px" width="6" height="9" viewBox="0 0 6 9"><path d="M0.500 0.700L4.800 4.500L0.500 8.300z" fill="#fff" stroke="#a5a5a5" stroke-width="1"/></svg>
<svg style="left:28px;top:343px" width="14" height="16" viewBox="0 0 14 16"><defs><linearGradient id="gfl" x1="0" y1="0" x2="1" y2="0"><stop offset="0" stop-color="#e6cc6a"/><stop offset="0.35" stop-color="#fbf2b8"/><stop offset="0.7" stop-color="#f0dc86"/><stop offset="1" stop-color="#e2c660"/></linearGradient><linearGradient id="gfr" x1="0" y1="0" x2="1" y2="0"><stop offset="0" stop-color="#d8bc58"/><stop offset="0.4" stop-color="#f6e89c"/><stop offset="1" stop-color="#e8d070"/></linearGradient></defs><path d="M11 7h2v8.200h-2z" fill="#e4ca68"/><path d="M11.600 9.500h1v3.500h-1z" fill="#3a9ce8"/><path d="M5.800 1.200q2.800-1.200 5.600 0v14q-2.800 1-5.600 0z" fill="url(#gfr)" stroke="#d2b450" stroke-width="0.400"/><path d="M0.300 1.400q3-1.400 6 0v14q-3 1-6 0z" fill="url(#gfl)" stroke="#d2b450" stroke-width="0.400"/></svg>
<svg style="left:15px;top:365px" width="6" height="9" viewBox="0 0 6 9"><path d="M0.500 0.700L4.800 4.500L0.500 8.300z" fill="#fff" stroke="#a5a5a5" stroke-width="1"/></svg>
<svg style="left:28px;top:361px" width="14" height="16" viewBox="0 0 14 16"><defs><linearGradient id="gfl" x1="0" y1="0" x2="1" y2="0"><stop offset="0" stop-color="#e6cc6a"/><stop offset="0.35" stop-color="#fbf2b8"/><stop offset="0.7" stop-color="#f0dc86"/><stop offset="1" stop-color="#e2c660"/></linearGradient><linearGradient id="gfr" x1="0" y1="0" x2="1" y2="0"><stop offset="0" stop-color="#d8bc58"/><stop offset="0.4" stop-color="#f6e89c"/><stop offset="1" stop-color="#e8d070"/></linearGradient></defs><path d="M11 7h2v8.200h-2z" fill="#e4ca68"/><path d="M11.600 9.500h1v3.500h-1z" fill="#3a9ce8"/><path d="M5.800 1.200q2.800-1.200 5.600 0v14q-2.800 1-5.600 0z" fill="url(#gfr)" stroke="#d2b450" stroke-width="0.400"/><path d="M0.300 1.400q3-1.400 6 0v14q-3 1-6 0z" fill="url(#gfl)" stroke="#d2b450" stroke-width="0.400"/></svg>
<svg style="left:29px;top:379px" width="14" height="17" viewBox="0 0 14 17"><path d="M0.500 1h9l3 3v11.500H0.500z" fill="#fff" stroke="#7c7c7c" stroke-width="0.900"/><path d="M9.500 1v3h3" fill="#ececec" stroke="#9a9a9a" stroke-width="0.700"/><g transform="translate(6.300,8.800) scale(1.150)"><circle cx="0" cy="0" r="3.300" fill="#e8a0dc" opacity=".8"/><path d="M-2.200-2.600h2.600v2.400h-2.600z" fill="#5a50b0"/><path d="M0.400-2.800h1.600v2.600h-1.600z" fill="#8a78cc"/><path d="M-3.200-0.400h6.400v0.900h-6.400z" fill="#2a1c90"/><path d="M-2.800 0.500h2.800v2.400h-2.800z" fill="#6a60bc"/><path d="M0.700 0.500h2v2.200h-2z" fill="#5a50b0"/><circle cx="-1.300" cy="1.600" r="0.900" fill="#f0c4ec"/></g></svg>
<svg style="left:29px;top:397px" width="14" height="17" viewBox="0 0 14 17"><path d="M0.500 1h9l3 3v11.500H0.500z" fill="#fff" stroke="#7c7c7c" stroke-width="0.900"/><path d="M9.500 1v3h3" fill="#ececec" stroke="#9a9a9a" stroke-width="0.700"/><g transform="translate(6.300,8.800) scale(1.150)"><circle cx="0" cy="0" r="3.300" fill="#e8a0dc" opacity=".8"/><path d="M-2.200-2.600h2.600v2.400h-2.600z" fill="#5a50b0"/><path d="M0.400-2.800h1.600v2.600h-1.600z" fill="#8a78cc"/><path d="M-3.200-0.400h6.400v0.900h-6.400z" fill="#2a1c90"/><path d="M-2.800 0.500h2.800v2.400h-2.800z" fill="#6a60bc"/><path d="M0.700 0.500h2v2.200h-2z" fill="#5a50b0"/><circle cx="-1.300" cy="1.600" r="0.900" fill="#f0c4ec"/></g></svg>
<span id="t236451" class="t" style="left:50.68px;top:343.84px;font-size:12px;line-height:16px;color:#000;letter-spacing:-0.468px;"><span class="u">_</span><span class="u">_</span>pycache<span class="u">_</span><span class="u">_</span></span>
<span id="tb0da22" class="t" style="left:49.78px;top:361.84px;font-size:12px;line-height:16px;color:#000;letter-spacing:0.225px;">build</span>
<span id="t10ee41" class="t" style="left:49.78px;top:379.84px;font-size:12px;line-height:16px;color:#000;letter-spacing:-0.180px;">create<span class="u">_</span>doc.py</span>
<span id="t0202e1" class="t" style="left:49.78px;top:397.84px;font-size:12px;line-height:16px;color:#000;letter-spacing:0.135px;">modify<span class="u">_</span>doc.py</span>
<span id="tf11171" class="t" style="left:7.20px;top:655.84px;font-size:12px;line-height:16px;color:#000;letter-spacing:-0.420px;">Filter:</span>
<div style="left:37px;top:654px;width:236px;height:20px;background:#fff;border:1px solid #d4d8e0;border-top-color:#b4b8c0;border-radius:3px;"></div>
<span id="t5ef6d1" class="t" style="left:37.10px;top:656.84px;font-size:12px;line-height:16px;color:#101010;letter-spacing:0.100px;clip-path:inset(0 0 0 2.90px);">:.pcd *.ply *.vtk *.xyz *.obj *.stl *.pr *.vti)</span>
<svg style="left:260px;top:662px" width="8" height="4" viewBox="0 0 8 4"><path d="M0 0h8L4 4z" fill="#000"/></svg>
<div style="left:8px;top:676px;width:265px;height:1px;background:#d0d0d0;"></div>
<div style="left:10px;top:676px;width:224px;height:1px;background:#8c8f98;"></div>
<div style="left:10px;top:677px;width:67px;height:18px;background:linear-gradient(180deg,#d2d2d2 0,#dedede 7px,#efefef 8px,#f2f2f2 100%);border:1px solid #898c95;border-top:none;"></div>
<div style="left:157px;top:677px;width:77px;height:18px;background:linear-gradient(180deg,#d2d2d2 0,#dedede 7px,#efefef 8px,#f2f2f2 100%);border:1px solid #898c95;border-top:none;"></div>
<div style="left:76px;top:676px;width:82px;height:21px;background:#fff;border:1px solid #898c95;border-top:none;"></div>
<span id="ta17411" class="t" style="left:19.22px;top:678.19px;font-size:11px;line-height:16px;color:#000;letter-spacing:-0.300px;">Call Stack</span>
<span id="t6c2022" class="t" style="left:89.22px;top:679.19px;font-size:11px;line-height:16px;color:#000;letter-spacing:-0.342px;">File System</span>
<span id="td19dc1" class="t" style="left:166.44px;top:678.19px;font-size:11px;line-height:16px;color:#000;letter-spacing:-0.144px;">Breakpoints</span>
<div style="left:277px;top:85px;width:558px;height:612px;background:#fff;border:1px solid #828790;"></div>
<div style="left:278px;top:86px;width:16px;height:594px;background:#e0e0e0;"></div>
<div style="left:278px;top:680px;width:556px;height:16px;background:linear-gradient(180deg,#e6e6e6 0,#f0f0f0 3px,#f2f2f2 100%);"></div>
<svg style="left:284px;top:684px" width="4" height="7" viewBox="0 0 4 7"><path d="M4 0L0 3.5L4 7Z" fill="#454545"/></svg>
<svg style="left:823px;top:684px" width="4" height="7" viewBox="0 0 4 7"><path d="M0 0L4 3.5L0 7Z" fill="#454545"/></svg>
<div style="left:296px;top:680px;width:138px;height:15px;border:1px solid #979797;border-radius:2.5px;background:linear-gradient(180deg,#f7f7f7 0,#ebebeb 48%,#d4d4d4 52%,#cdcdcd 80%,#d6d6d6 100%);box-shadow:inset 0 0 0 1px rgba(255,255,255,.7);"><div style="left:64px;top:3px;width:1px;height:7px;background:linear-gradient(180deg,#2c2c2c,#8a8a8a);"></div><div style="left:65px;top:3px;width:1px;height:7px;background:rgba(255,255,255,.75);"></div><div style="left:67px;top:3px;width:1px;height:7px;background:linear-gradient(180deg,#2c2c2c,#8a8a8a);"></div><div style="left:68px;top:3px;width:1px;height:7px;background:rgba(255,255,255,.75);"></div><div style="left:70px;top:3px;width:1px;height:7px;background:linear-gradient(180deg,#2c2c2c,#8a8a8a);"></div><div style="left:71px;top:3px;width:1px;height:7px;background:rgba(255,255,255,.75);"></div></div>
<span id="tc4ca41" class="t" style="left:283.60px;top:86.67px;font-size:12.5px;line-height:16px;color:#000;font-family:"Liberation Mono",monospace;">1</span>
<span id="t22a1d1" class="t" style="left:295.50px;top:86.28px;font-size:16.5px;line-height:16px;color:#000;letter-spacing:1.000px;font-family:"Liberation Mono",monospace;font-weight:bold;-webkit-text-stroke:0.350px #000;">&gt;&gt;</span>
<span id="t0cfdb1" class="t" style="left:797.50px;top:699.84px;font-size:12px;line-height:16px;color:#000;letter-spacing:-0.053px;">Current Directory:</span>
<span id="t452cf1" class="t" style="left:894.00px;top:699.84px;font-size:12px;line-height:16px;color:#000;letter-spacing:0.397px;">K:/git-itom/build/itom/docs/userDoc</span>
<div style="left:1094px;top:700px;width:1px;height:15px;background:#d0d0d0;"></div>
<div style="left:1108px;top:707px;width:1px;height:1px;background:#fff;"></div>
<div style="left:1109px;top:708px;width:1px;height:1px;background:#a4a4a4;"></div>
<div style="left:1109px;top:707px;width:1px;height:1px;background:#d4d4d4;"></div>
<div style="left:1108px;top:708px;width:1px;height:1px;background:#d4d4d4;"></div>
<div style="left:1105px;top:710px;width:1px;height:1px;background:#fff;"></div>
<div style="left:1106px;top:711px;width:1px;height:1px;background:#a4a4a4;"></div>
<div style="left:1106px;top:710px;width:1px;height:1px;background:#d4d4d4;"></div>
<div style="left:1105px;top:711px;width:1px;height:1px;background:#d4d4d4;"></div>
<div style="left:1108px;top:710px;width:1px;height:1px;background:#fff;"></div>
<div style="left:1109px;top:711px;width:1px;height:1px;background:#a4a4a4;"></div>
<div style="left:1109px;top:710px;width:1px;height:1px;background:#d4d4d4;"></div>
<div style="left:1108px;top:711px;width:1px;height:1px;background:#d4d4d4;"></div>
<div style="left:1102px;top:713px;width:1px;height:1px;background:#fff;"></div>
<div style="left:1103px;top:714px;width:1px;height:1px;background:#a4a4a4;"></div>
<div style="left:1103px;top:713px;width:1px;height:1px;background:#d4d4d4;"></div>
<div style="left:1102px;top:714px;width:1px;height:1px;background:#d4d4d4;"></div>
<div style="left:1105px;top:713px;width:1px;height:1px;background:#fff;"></div>
<div style="left:1106px;top:714px;width:1px;height:1px;background:#a4a4a4;"></div>
<div style="left:1106px;top:713px;width:1px;height:1px;background:#d4d4d4;"></div>
<div style="left:1105px;top:714px;width:1px;height:1px;background:#d4d4d4;"></div>
<div style="left:1108px;top:713px;width:1px;height:1px;background:#fff;"></div>
<div style="left:1109px;top:714px;width:1px;height:1px;background:#a4a4a4;"></div>
<div style="left:1109px;top:713px;width:1px;height:1px;background:#d4d4d4;"></div>
<div style="left:1108px;top:714px;width:1px;height:1px;background:#d4d4d4;"></div>
<div style="left:839px;top:86px;width:274px;height:19px;background:#dcdcdc;border:1px solid #b4b4b4;"></div>
<span id="t2aaa91" class="t" style="left:843.50px;top:89.19px;font-size:11px;line-height:16px;color:#000;letter-spacing:-0.324px;">Global Variables</span>
<svg style="left:1084px;top:91px" width="9" height="10" viewBox="0 0 9 10"><path d="M2 0h6v6H6v-1h1V2H3v1H2z" fill="#000"/><rect x="0" y="3" width="6" height="6" fill="#000"/><rect x="1" y="5" width="4" height="3" fill="#e9e9e9"/></svg>
<svg style="left:1100px;top:92px" width="8" height="7" viewBox="0 0 8 7"><path d="M0 0h1.900L4 2.500 6.100 0H8L5 3.500 8 7H6.100L4 4.500 1.900 7H0l3-3.500z" fill="#000"/></svg>
<div style="left:839px;top:107px;width:274px;height:1px;background:#fff;"></div>
<div style="left:843px;top:112px;width:3px;height:20px;"><div style="left:0;top:0px;width:2px;height:2px;background:#b6b6b6;"></div><div style="left:0;top:0px;width:1px;height:1px;background:#fff;"></div><div style="left:1px;top:1px;width:1px;height:1px;background:#9c9c9c;"></div><div style="left:0;top:4px;width:2px;height:2px;background:#b6b6b6;"></div><div style="left:0;top:4px;width:1px;height:1px;background:#fff;"></div><div style="left:1px;top:5px;width:1px;height:1px;background:#9c9c9c;"></div><div style="left:0;top:8px;width:2px;height:2px;background:#b6b6b6;"></div><div style="left:0;top:8px;width:1px;height:1px;background:#fff;"></div><div style="left:1px;top:9px;width:1px;height:1px;background:#9c9c9c;"></div><div style="left:0;top:12px;width:2px;height:2px;background:#b6b6b6;"></div><div style="left:0;top:12px;width:1px;height:1px;background:#fff;"></div><div style="left:1px;top:13px;width:1px;height:1px;background:#9c9c9c;"></div><div style="left:0;top:16px;width:2px;height:2px;background:#b6b6b6;"></div><div style="left:0;top:16px;width:1px;height:1px;background:#fff;"></div><div style="left:1px;top:17px;width:1px;height:1px;background:#9c9c9c;"></div></div>
<svg style="left:852px;top:112px" width="17" height="17" viewBox="0 0 17 17"><defs><linearGradient id="ggarr" x1="0" y1="0" x2="1" y2="0"><stop offset="0" stop-color="#0f8a0f"/><stop offset="0.42" stop-color="#6fe86f"/><stop offset="1" stop-color="#0a7a0a"/></linearGradient></defs><rect x="2.500" y="1.200" width="12" height="13.300" fill="#fcfcfc" stroke="#b8b8b8" stroke-width="0.900"/><path d="M5.400 0.400h6v7.400h4.200L8.400 15.600 0.800 7.800h4.600z" fill="url(#ggarr)" stroke="#0a8a0a" stroke-width="0.500"/></svg>
<svg style="left:875px;top:112px" width="16" height="16" viewBox="0 0 16 16"><path d="M0.800 0.800h13.600v14H2.200L0.800 13.400z" fill="#8c8c8c" stroke="#6e6e6e" stroke-width="0.800"/><rect x="3.200" y="1.200" width="8.800" height="5" fill="#d8d8d8"/><rect x="8.800" y="2" width="2" height="3.400" fill="#7a7a7a"/><rect x="2.800" y="8.200" width="9.800" height="6.400" fill="#e8e8e8"/><path d="M3.800 10h7.800M3.800 12.300h7.800" stroke="#a8a8a8" stroke-width="0.900"/></svg>
<svg style="left:898px;top:112px" width="16" height="16" viewBox="0 0 16 16"><path d="M1.500 1.500h9.500v8.500l-4 4.500h-5.500z" fill="#f6f6f6" stroke="#d8d8d8" stroke-width="0.800"/><path d="M7 14.500v-4.500h4z" fill="#e2e2e2" stroke="#d0d0d0" stroke-width="0.500"/><circle cx="12.200" cy="3.800" r="3.700" fill="#8e8e8e"/><path d="M10.600 2.200l3.200 3.200M13.800 2.200l-3.200 3.200" stroke="#f4f4f4" stroke-width="1.300"/></svg>
<svg style="left:921px;top:112px" width="17" height="16" viewBox="0 0 17 16"><rect x="0.700" y="4.500" width="15" height="7.600" rx="1.800" fill="#fdfdfd" stroke="#bdbdbd" stroke-width="1"/><path d="M4.500 6.200v4.400M3.500 6.200h2M3.500 10.600h2" stroke="#a8a8a8" stroke-width="0.700"/></svg>
<div style="left:839px;top:132px;width:274px;height:1px;background:#b4b4b4;"></div>
<div style="left:839px;top:131px;width:274px;height:1px;background:#e6e6e6;"></div>
<div style="left:839px;top:133px;width:274px;height:266px;background:#fff;border:1px solid #828790;"></div>
<div style="left:840px;top:134px;width:256px;height:22px;background:linear-gradient(180deg,#ffffff 0,#ffffff 8px,#f7f8fa 9px,#f1f2f4 100%);border-bottom:1px solid #d5d5d5;"></div>
<div style="left:840px;top:134px;width:100px;height:22px;background:linear-gradient(180deg,#f2f9fc 0,#f2f9fc 8px,#e1f1f9 9px,#d8ecf6 100%);border:1px solid #96d9f9;border-top:none;border-left:none;"></div>
<div style="left:1039px;top:134px;width:1px;height:21px;background:#e2e3ea;"></div>
<svg style="left:886.5px;top:135px" width="8" height="5" viewBox="0 0 8 5"><defs><linearGradient id="gsa" x1="0" y1="0" x2="1" y2="1"><stop offset="0" stop-color="#6fb8e4"/><stop offset="1" stop-color="#d8f0fa"/></linearGradient></defs><path d="M0.300 4L4 0.200L7.700 4z" fill="url(#gsa)"/><path d="M0.500 3.800L4 0.300" stroke="#2f4f63" stroke-width="1.100" fill="none"/><path d="M4 0.300L7.500 3.800" stroke="#a8cfe4" stroke-width="0.600" fill="none"/></svg>
<span id="td33fc1" class="t" style="left:843.66px;top:137.84px;font-size:12px;line-height:16px;color:#000;letter-spacing:-0.210px;">Globals</span>
<span id="t689201" class="t" style="left:944.56px;top:137.84px;font-size:12px;line-height:16px;color:#000;letter-spacing:-0.360px;">Value</span>
<span id="ta1fa21" class="t" style="left:1044.00px;top:137.84px;font-size:12px;line-height:16px;color:#000;letter-spacing:0.180px;">Type</span>
<span id="t5eaf41" class="t" style="left:863.90px;top:157.84px;font-size:12px;line-height:16px;color:#000;letter-spacing:-0.300px;"><span class="u">_</span><span class="u">_</span>doc<span class="u">_</span><span class="u">_</span></span>
<span id="tb0a2b1" class="t" style="left:944.00px;top:157.84px;font-size:12px;line-height:16px;color:#000;letter-spacing:-0.113px;">&lt;double... value&gt;</span>
<span id="t341be1" class="t" style="left:1043.84px;top:157.84px;font-size:12px;line-height:16px;color:#000;letter-spacing:-0.900px;">str</span>
<span id="t2d9ce1" class="t" style="left:863.90px;top:174.84px;font-size:12px;line-height:16px;color:#000;letter-spacing:-0.669px;"><span class="u">_</span><span class="u">_</span>name<span class="u">_</span><span class="u">_</span></span>
<span id="t558c61" class="t" style="left:943.78px;top:174.84px;font-size:12px;line-height:16px;color:#000;letter-spacing:0.260px;">'<span class="u">_</span><span class="u">_</span>main<span class="u">_</span><span class="u">_</span>'</span>
<span id="t341be2" class="t" style="left:1043.84px;top:174.84px;font-size:12px;line-height:16px;color:#000;letter-spacing:-0.900px;">str</span>
<span id="te155b1" class="t" style="left:863.90px;top:191.84px;font-size:12px;line-height:16px;color:#000;letter-spacing:-0.504px;"><span class="u">_</span><span class="u">_</span>package<span class="u">_</span><span class="u">_</span></span>
<span id="t6adf91" class="t" style="left:944.00px;top:191.84px;font-size:12px;line-height:16px;color:#000;letter-spacing:-0.240px;">None</span>
<span id="ta41791" class="t" style="left:1043.30px;top:191.84px;font-size:12px;line-height:16px;color:#000;clip-path:inset(0 calc(100% - 51.70px) 0 0);">NoneType</span>
<span id="t1b18c1" class="t" style="left:863.90px;top:208.84px;font-size:12px;line-height:16px;color:#000;letter-spacing:-0.849px;"><span class="u">_</span><span class="u">_</span>spec<span class="u">_</span><span class="u">_</span></span>
<span id="t6adf92" class="t" style="left:944.00px;top:208.84px;font-size:12px;line-height:16px;color:#000;letter-spacing:-0.240px;">None</span>
<span id="ta41792" class="t" style="left:1043.30px;top:208.84px;font-size:12px;line-height:16px;color:#000;clip-path:inset(0 calc(100% - 51.70px) 0 0);">NoneType</span>
<span id="ta0df81" class="t" style="left:863.90px;top:225.84px;font-size:12px;line-height:16px;color:#000;letter-spacing:0.113px;"><span class="u">_</span>platform</span>
<span id="t5933d1" class="t" style="left:943.78px;top:225.84px;font-size:12px;line-height:16px;color:#000;letter-spacing:-0.180px;">'win32'</span>
<span id="t341be3" class="t" style="left:1043.84px;top:225.84px;font-size:12px;line-height:16px;color:#000;letter-spacing:-0.900px;">str</span>
<span id="t31fd11" class="t" style="left:863.00px;top:242.84px;font-size:12px;line-height:16px;color:#000;letter-spacing:0.051px;">aboutDir</span>
<span id="tdcac81" class="t" style="left:943.78px;top:242.84px;font-size:12px;line-height:16px;color:#000;letter-spacing:0.170px;">'K:/git-...outItem'</span>
<span id="t341be4" class="t" style="left:1043.84px;top:242.84px;font-size:12px;line-height:16px;color:#000;letter-spacing:-0.900px;">str</span>
<span id="t144471" class="t" style="left:863.00px;top:259.84px;font-size:12px;line-height:16px;color:#000;letter-spacing:-0.135px;">all<span class="u">_</span>files</span>
<span id="tf827c1" class="t" style="left:944.00px;top:259.84px;font-size:12px;line-height:16px;color:#000;letter-spacing:-0.540px;">True</span>
<span id="tc506f1" class="t" style="left:1042.94px;top:259.84px;font-size:12px;line-height:16px;color:#000;letter-spacing:0.420px;">bool</span>
<span id="td2a571" class="t" style="left:863.00px;top:276.84px;font-size:12px;line-height:16px;color:#000;">app</span>
<span id="tcf9581" class="t" style="left:944.00px;top:276.84px;font-size:12px;line-height:16px;color:#000;letter-spacing:-0.411px;">&lt;sphin...7FC88&gt;</span>
<span id="tdcdfb1" class="t" style="left:1042.94px;top:276.84px;font-size:12px;line-height:16px;color:#000;letter-spacing:-0.360px;">Sphinx</span>
<span id="t2d5ec1" class="t" style="left:863.00px;top:293.84px;font-size:12px;line-height:16px;color:#000;letter-spacing:-0.330px;">basedir</span>
<span id="t0b2811" class="t" style="left:943.78px;top:293.84px;font-size:12px;line-height:16px;color:#000;letter-spacing:-0.010px;">'K:/git-...userDoc'</span>
<span id="t341be5" class="t" style="left:1043.84px;top:293.84px;font-size:12px;line-height:16px;color:#000;letter-spacing:-0.900px;">str</span>
<span id="t09e0b1" class="t" style="left:863.00px;top:310.84px;font-size:12px;line-height:16px;color:#000;letter-spacing:0.072px;">buildername</span>
<span id="t940251" class="t" style="left:943.78px;top:310.84px;font-size:12px;line-height:16px;color:#000;letter-spacing:0.540px;">'html'</span>
<span id="t341be6" class="t" style="left:1043.84px;top:310.84px;font-size:12px;line-height:16px;color:#000;letter-spacing:-0.900px;">str</span>
<span id="t0d36c1" class="t" style="left:863.00px;top:327.84px;font-size:12px;line-height:16px;color:#000;letter-spacing:-0.049px;">buildernames</span>
<span id="t400371" class="t" style="left:942.88px;top:327.84px;font-size:12px;line-height:16px;color:#000;letter-spacing:-0.042px;">[1 element(s)]</span>
<span id="t10ae91" class="t" style="left:1042.94px;top:327.84px;font-size:12px;line-height:16px;color:#000;letter-spacing:0.000px;">list</span>
<span id="t57b351" class="t" style="left:863.00px;top:344.84px;font-size:12px;line-height:16px;color:#000;letter-spacing:-0.468px;">BUTTON</span>
<span id="tcfcd21" class="t" style="left:943.50px;top:344.84px;font-size:12px;line-height:16px;color:#000;">0</span>
<span id="tfa7151" class="t" style="left:1042.94px;top:344.84px;font-size:12px;line-height:16px;color:#000;letter-spacing:0.450px;">int</span>
<span id="t21f681" class="t" style="left:863.00px;top:361.84px;font-size:12px;line-height:16px;color:#000;letter-spacing:0.120px;">confdir</span>
<span id="t1da9e1" class="t" style="left:943.78px;top:361.84px;font-size:12px;line-height:16px;color:#000;letter-spacing:0.300px;">'K:/git-...ig<span class="u">_</span>html'</span>
<span id="t341be7" class="t" style="left:1043.84px;top:361.84px;font-size:12px;line-height:16px;color:#000;letter-spacing:-0.900px;">str</span>
<svg style="left:849px;top:279px" width="6" height="9" viewBox="0 0 6 9"><path d="M0.500 0.700L4.800 4.500L0.500 8.300z" fill="#fff" stroke="#a5a5a5" stroke-width="1"/></svg>
<svg style="left:849px;top:330px" width="6" height="9" viewBox="0 0 6 9"><path d="M0.500 0.700L4.800 4.500L0.500 8.300z" fill="#fff" stroke="#a5a5a5" stroke-width="1"/></svg>
<div style="left:1096px;top:134px;width:16px;height:247px;background:linear-gradient(90deg,#e6e6e6 0,#f0f0f0 3px,#f2f2f2 100%);"></div>
<svg style="left:1101px;top:141px" width="7" height="4" viewBox="0 0 7 4"><path d="M0 4L3.5 0L7 4Z" fill="#454545"/></svg>
<svg style="left:1101px;top:371px" width="7" height="4" viewBox="0 0 7 4"><path d="M0 0L3.5 4L7 0Z" fill="#454545"/></svg>
<div style="left:1096px;top:152px;width:15px;height:113px;border:1px solid #979797;border-radius:2.5px;background:linear-gradient(90deg,#f7f7f7 0,#ebebeb 48%,#d4d4d4 52%,#cdcdcd 80%,#d6d6d6 100%);box-shadow:inset 0 0 0 1px rgba(255,255,255,.7);"><div style="left:3px;top:52px;width:7px;height:1px;background:linear-gradient(90deg,#2c2c2c,#8a8a8a);"></div><div style="left:3px;top:53px;width:7px;height:1px;background:rgba(255,255,255,.75);"></div><div style="left:3px;top:55px;width:7px;height:1px;background:linear-gradient(90deg,#2c2c2c,#8a8a8a);"></div><div style="left:3px;top:56px;width:7px;height:1px;background:rgba(255,255,255,.75);"></div><div style="left:3px;top:58px;width:7px;height:1px;background:linear-gradient(90deg,#2c2c2c,#8a8a8a);"></div><div style="left:3px;top:59px;width:7px;height:1px;background:rgba(255,255,255,.75);"></div></div>
<div style="left:840px;top:382px;width:256px;height:16px;background:linear-gradient(180deg,#e6e6e6 0,#f0f0f0 3px,#f2f2f2 100%);"></div>
<svg style="left:846px;top:386px" width="4" height="7" viewBox="0 0 4 7"><path d="M4 0L0 3.5L4 7Z" fill="#454545"/></svg>
<svg style="left:1085px;top:386px" width="4" height="7" viewBox="0 0 4 7"><path d="M0 0L4 3.5L0 7Z" fill="#454545"/></svg>
<div style="left:858px;top:382px;width:185px;height:15px;border:1px solid #979797;border-radius:2.5px;background:linear-gradient(180deg,#f7f7f7 0,#ebebeb 48%,#d4d4d4 52%,#cdcdcd 80%,#d6d6d6 100%);box-shadow:inset 0 0 0 1px rgba(255,255,255,.7);"><div style="left:87px;top:3px;width:1px;height:7px;background:linear-gradient(180deg,#2c2c2c,#8a8a8a);"></div><div style="left:88px;top:3px;width:1px;height:7px;background:rgba(255,255,255,.75);"></div><div style="left:90px;top:3px;width:1px;height:7px;background:linear-gradient(180deg,#2c2c2c,#8a8a8a);"></div><div style="left:91px;top:3px;width:1px;height:7px;background:rgba(255,255,255,.75);"></div><div style="left:93px;top:3px;width:1px;height:7px;background:linear-gradient(180deg,#2c2c2c,#8a8a8a);"></div><div style="left:94px;top:3px;width:1px;height:7px;background:rgba(255,255,255,.75);"></div></div>
<div style="left:1096px;top:381px;width:16px;height:17px;background:#f0f0f0;"></div>
<div style="left:939px;top:399px;width:91px;height:19px;background:linear-gradient(180deg,#d2d2d2 0,#dedede 7px,#efefef 8px,#f2f2f2 100%);border:1px solid #898c95;border-top:none;"></div>
<div style="left:839px;top:399px;width:101px;height:21px;background:#fff;border:1px solid #898c95;border-top:none;"></div>
<span id="t2aaa92" class="t" style="left:850.78px;top:402.19px;font-size:11px;line-height:16px;color:#000;letter-spacing:-0.372px;">Global Variables</span>
<span id="tb74a31" class="t" style="left:949.22px;top:401.19px;font-size:11px;line-height:16px;color:#000;letter-spacing:-0.309px;">Local Variables</span>
<div style="left:839px;top:425px;width:274px;height:19px;background:#dcdcdc;border:1px solid #b4b4b4;"></div>
<span id="tbb3801" class="t" style="left:843.00px;top:428.19px;font-size:11px;line-height:16px;color:#000;letter-spacing:-0.600px;">Plugins</span>
<svg style="left:1084px;top:430px" width="9" height="10" viewBox="0 0 9 10"><path d="M2 0h6v6H6v-1h1V2H3v1H2z" fill="#000"/><rect x="0" y="3" width="6" height="6" fill="#000"/><rect x="1" y="5" width="4" height="3" fill="#e9e9e9"/></svg>
<svg style="left:1100px;top:431px" width="8" height="7" viewBox="0 0 8 7"><path d="M0 0h1.900L4 2.500 6.100 0H8L5 3.500 8 7H6.100L4 4.500 1.900 7H0l3-3.500z" fill="#000"/></svg>
<div style="left:839px;top:446px;width:274px;height:1px;background:#fff;"></div>
<div style="left:843px;top:450px;width:3px;height:20px;"><div style="left:0;top:0px;width:2px;height:2px;background:#b6b6b6;"></div><div style="left:0;top:0px;width:1px;height:1px;background:#fff;"></div><div style="left:1px;top:1px;width:1px;height:1px;background:#9c9c9c;"></div><div style="left:0;top:4px;width:2px;height:2px;background:#b6b6b6;"></div><div style="left:0;top:4px;width:1px;height:1px;background:#fff;"></div><div style="left:1px;top:5px;width:1px;height:1px;background:#9c9c9c;"></div><div style="left:0;top:8px;width:2px;height:2px;background:#b6b6b6;"></div><div style="left:0;top:8px;width:1px;height:1px;background:#fff;"></div><div style="left:1px;top:9px;width:1px;height:1px;background:#9c9c9c;"></div><div style="left:0;top:12px;width:2px;height:2px;background:#b6b6b6;"></div><div style="left:0;top:12px;width:1px;height:1px;background:#fff;"></div><div style="left:1px;top:13px;width:1px;height:1px;background:#9c9c9c;"></div><div style="left:0;top:16px;width:2px;height:2px;background:#b6b6b6;"></div><div style="left:0;top:16px;width:1px;height:1px;background:#fff;"></div><div style="left:1px;top:17px;width:1px;height:1px;background:#9c9c9c;"></div></div>
<svg style="left:1079px;top:451px" width="16" height="16" viewBox="0 0 16 16"><defs><linearGradient id="ggear" x1="0" y1="0" x2="0" y2="1"><stop offset="0" stop-color="#eeeeF0"/><stop offset="0.5" stop-color="#d0d0d6"/><stop offset="1" stop-color="#8e8e98"/></linearGradient></defs><g transform="translate(8,8)"><path d="M-1.01 -7.73L1.01 -7.73L1.62 -6.09L1.64 -6.08L2.99 -7.20L4.74 -6.19L4.45 -4.46L4.46 -4.45L6.19 -4.74L7.20 -2.99L6.08 -1.64L6.09 -1.62L7.73 -1.01L7.73 1.01L6.09 1.62L6.08 1.64L7.20 2.99L6.19 4.74L4.46 4.45L4.45 4.46L4.74 6.19L2.99 7.20L1.64 6.08L1.62 6.09L1.01 7.73L-1.01 7.73L-1.62 6.09L-1.64 6.08L-2.99 7.20L-4.74 6.19L-4.45 4.46L-4.46 4.45L-6.19 4.74L-7.20 2.99L-6.08 1.64L-6.09 1.62L-7.73 1.01L-7.73 -1.01L-6.09 -1.62L-6.08 -1.64L-7.20 -2.99L-6.19 -4.74L-4.46 -4.45L-4.45 -4.46L-4.74 -6.19L-2.99 -7.20L-1.64 -6.08L-1.62 -6.09z" fill="url(#ggear)" stroke="#a2a2aa" stroke-width="0.700" stroke-linejoin="round"/><circle r="3.200" fill="#f4f4f4" stroke="#787e88" stroke-width="1.600"/></g></svg>
<svg style="left:1101px;top:457px" width="7" height="4" viewBox="0 0 7 4"><path d="M0 0h7L3.500 4z" fill="#000"/></svg>
<div style="left:839px;top:472px;width:274px;height:1px;background:#b4b4b4;"></div>
<div style="left:839px;top:471px;width:274px;height:1px;background:#e6e6e6;"></div>
<div style="left:839px;top:473px;width:274px;height:224px;background:#fff;border:1px solid #828790;"></div>
<div style="left:840px;top:474px;width:272px;height:22px;background:linear-gradient(180deg,#ffffff 0,#ffffff 8px,#f7f8fa 9px,#f1f2f4 100%);border-bottom:1px solid #d5d5d5;"></div>
<div style="left:840px;top:474px;width:184px;height:22px;background:linear-gradient(180deg,#f2f9fc 0,#f2f9fc 8px,#e1f1f9 9px,#d8ecf6 100%);border:1px solid #96d9f9;border-top:none;border-left:none;"></div>
<div style="left:1074px;top:474px;width:1px;height:21px;background:#e2e3ea;"></div>
<svg style="left:928.5px;top:475px" width="8" height="5" viewBox="0 0 8 5"><defs><linearGradient id="gsa" x1="0" y1="0" x2="1" y2="1"><stop offset="0" stop-color="#6fb8e4"/><stop offset="1" stop-color="#d8f0fa"/></linearGradient></defs><path d="M0.300 4L4 0.200L7.700 4z" fill="url(#gsa)"/><path d="M0.500 3.800L4 0.300" stroke="#2f4f63" stroke-width="1.100" fill="none"/><path d="M4 0.300L7.500 3.800" stroke="#a8cfe4" stroke-width="0.600" fill="none"/></svg>
<span id="t49ee32" class="t" style="left:843.66px;top:477.84px;font-size:12px;line-height:16px;color:#000;letter-spacing:0.180px;">Name</span>
<span id="ta1fa22" class="t" style="left:1029.00px;top:477.84px;font-size:12px;line-height:16px;color:#000;letter-spacing:-0.300px;">Type</span>
<span id="t34b6c1" class="t" style="left:1079.00px;top:477.84px;font-size:12px;line-height:16px;color:#000;letter-spacing:-0.300px;clip-path:inset(0 calc(100% - 32.00px) 0 0);">Version</span>
<span id="ta2ec21" class="t" style="left:885.50px;top:496.84px;font-size:12px;line-height:16px;color:#000;letter-spacing:-0.026px;">Actuator</span>
<span id="t4afa81" class="t" style="left:885.50px;top:514.84px;font-size:12px;line-height:16px;color:#000;letter-spacing:0.315px;">Algorithm</span>
<span id="tf805a1" class="t" style="left:885.50px;top:532.84px;font-size:12px;line-height:16px;color:#000;letter-spacing:-0.720px;">DataIO</span>
<span id="t0daf81" class="t" style="left:906.12px;top:550.84px;font-size:12px;line-height:16px;color:#000;letter-spacing:-1.020px;">ADDA</span>
<span id="tc707a1" class="t" style="left:905.22px;top:568.84px;font-size:12px;line-height:16px;color:#000;letter-spacing:-0.540px;">Grabber</span>
<span id="t130671" class="t" style="left:905.22px;top:586.84px;font-size:12px;line-height:16px;color:#000;letter-spacing:-0.900px;">Raw IO</span>
<svg style="left:849px;top:501px" width="6" height="9" viewBox="0 0 6 9"><path d="M0.500 0.700L4.800 4.500L0.500 8.300z" fill="#fff" stroke="#a5a5a5" stroke-width="1"/></svg>
<svg style="left:849px;top:519px" width="6" height="9" viewBox="0 0 6 9"><path d="M0.500 0.700L4.800 4.500L0.500 8.300z" fill="#fff" stroke="#a5a5a5" stroke-width="1"/></svg>
<svg style="left:848px;top:539px" width="6" height="6" viewBox="0 0 6 6"><path d="M5.300 0.500V5.300H0.500z" fill="#595959" stroke="#262626" stroke-width="0.800"/></svg>
<svg style="left:869px;top:555px" width="6" height="9" viewBox="0 0 6 9"><path d="M0.500 0.700L4.800 4.500L0.500 8.300z" fill="#fff" stroke="#a5a5a5" stroke-width="1"/></svg>
<svg style="left:869px;top:573px" width="6" height="9" viewBox="0 0 6 9"><path d="M0.500 0.700L4.800 4.500L0.500 8.300z" fill="#fff" stroke="#a5a5a5" stroke-width="1"/></svg>
<svg style="left:869px;top:591px" width="6" height="9" viewBox="0 0 6 9"><path d="M0.500 0.700L4.800 4.500L0.500 8.300z" fill="#fff" stroke="#a5a5a5" stroke-width="1"/></svg>
<svg style="left:864px;top:499px" width="14" height="14" viewBox="0 0 14 14"><g transform="translate(7.200,6.800) rotate(-20) scale(0.92,1)"><path d="M0-6.500l1.400 1 1.700-0.700 0.800 1.600 1.800 0.200-0.100 1.800 1.500 1-0.900 1.600 0.900 1.600-1.500 1 0.100 1.800-1.800 0.200-0.800 1.600-1.700-0.700L0 6.500l-1.400-1-1.700 0.700-0.800-1.600-1.800-0.200 0.100-1.800-1.500-1 0.900-1.600-0.900-1.600 1.500-1-0.100-1.800 1.800-0.200 0.800-1.600 1.700 0.700z" fill="#6a7080" stroke="#3c4250" stroke-width="0.700"/><circle r="3.800" fill="#b8bcc8" stroke="#4a5060" stroke-width="0.600"/><circle cx="-1" cy="0.800" r="2" fill="#50586a"/><circle cx="-0.600" cy="0.300" r="1.100" fill="#e8e4d8"/></g></svg>
<svg style="left:863px;top:517px" width="16" height="14" viewBox="0 0 16 14"><rect x="0.300" y="0.300" width="15.400" height="13.400" fill="#f8fafc" stroke="#a4c8ec" stroke-width="0.700"/><rect x="0.300" y="0" width="15.400" height="1.800" fill="#7ab8ee"/><text x="2.600" y="11.300" font-family="Liberation Serif" font-style="italic" font-size="13.500" fill="#404040" textLength="11.500" lengthAdjust="spacingAndGlyphs">fx</text></svg>
<svg style="left:863px;top:533px" width="16" height="17" viewBox="0 0 16 17"><defs><linearGradient id="gpz" x1="0" y1="0" x2="0" y2="1"><stop offset="0" stop-color="#58d058"/><stop offset="0.6" stop-color="#38c038"/><stop offset="1" stop-color="#1fa81f"/></linearGradient></defs><path d="M3.200 6.200h2.600q-1.600-4.800 2.200-5.200 3.800 0.400 2.200 5.200h5.200v2.400q-2.800-1.200-3 1.200 0.200 2.400 3 1.200v5H3.200v-3.600q-2.800 1.400-3-1.400 0.200-2.800 3-1.400z" fill="url(#gpz)" stroke="#2cac2c" stroke-width="0.500"/></svg>
<svg style="left:884px;top:554px" width="14" height="12" viewBox="0 0 14 12"><rect x="0.300" y="0.300" width="13.400" height="11.400" fill="#0c1428" stroke="#606870" stroke-width="0.600"/><path d="M1.500 6h3.500l1-3 1 6 1-3h4.500" fill="none" stroke="#c8d8f8" stroke-width="0.800"/><path d="M6.800 1v10" stroke="#5a6a9a" stroke-width="0.500"/></svg>
<svg style="left:884px;top:572px" width="14" height="11" viewBox="0 0 14 11"><rect x="0.300" y="1.500" width="13.400" height="9.200" rx="1" fill="#bcbcbc" stroke="#9a9a9a" stroke-width="0.500"/><rect x="5" y="0.300" width="5" height="2" fill="#c8c8c8"/><rect x="1" y="2.500" width="1.800" height="7.200" fill="#787878"/><circle cx="8" cy="6.300" r="3.600" fill="#c8c8c8" stroke="#909090" stroke-width="0.600"/><circle cx="8" cy="6.300" r="2.600" fill="#6aa0f0"/></svg>
<svg style="left:883px;top:590px" width="16" height="11" viewBox="0 0 16 11"><path d="M0.500 6.500L9.500 1.200l6 1.300-8.500 6z" fill="#b8c0c8" stroke="#707880" stroke-width="0.500"/><path d="M0.500 6.500l6.500 2v2l-6.500-2.500z" fill="#3a80d0"/><path d="M7 8.500l8.500-6v1.500L7 10.500z" fill="#404850"/></svg>
<div style="left:840px;top:680px;width:272px;height:16px;background:linear-gradient(180deg,#e6e6e6 0,#f0f0f0 3px,#f2f2f2 100%);"></div>
<svg style="left:846px;top:684px" width="4" height="7" viewBox="0 0 4 7"><path d="M4 0L0 3.5L4 7Z" fill="#454545"/></svg>
<svg style="left:1101px;top:684px" width="4" height="7" viewBox="0 0 4 7"><path d="M0 0L4 3.5L0 7Z" fill="#454545"/></svg>
<div style="left:858px;top:680px;width:78px;height:15px;border:1px solid #979797;border-radius:2.5px;background:linear-gradient(180deg,#f7f7f7 0,#ebebeb 48%,#d4d4d4 52%,#cdcdcd 80%,#d6d6d6 100%);box-shadow:inset 0 0 0 1px rgba(255,255,255,.7);"><div style="left:34px;top:3px;width:1px;height:7px;background:linear-gradient(180deg,#2c2c2c,#8a8a8a);"></div><div style="left:35px;top:3px;width:1px;height:7px;background:rgba(255,255,255,.75);"></div><div style="left:37px;top:3px;width:1px;height:7px;background:linear-gradient(180deg,#2c2c2c,#8a8a8a);"></div><div style="left:38px;top:3px;width:1px;height:7px;background:rgba(255,255,255,.75);"></div><div style="left:40px;top:3px;width:1px;height:7px;background:linear-gradient(180deg,#2c2c2c,#8a8a8a);"></div><div style="left:41px;top:3px;width:1px;height:7px;background:rgba(255,255,255,.75);"></div></div>
</body></html>
